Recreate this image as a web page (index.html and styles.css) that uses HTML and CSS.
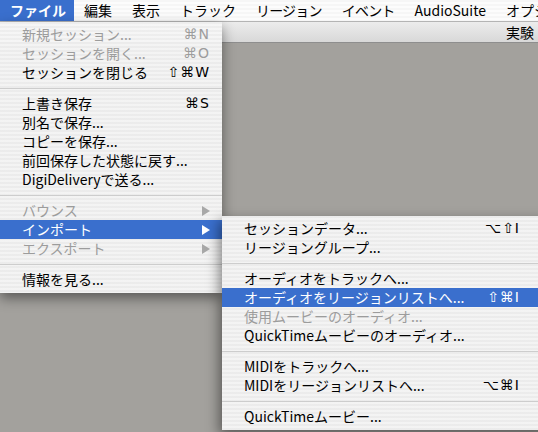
FILE: index.html
```html
<!DOCTYPE html>
<html lang="ja">
<head>
  <meta charset="UTF-8">
  <title>ファイル メニュー</title>
  <link rel="stylesheet" href="styles.css">
</head>
<body>
  <div class="menubar">
    <span class="mb-item active">ファイル</span>
    <span class="mb-item">編集</span>
    <span class="mb-item">表示</span>
    <span class="mb-item">トラック</span>
    <span class="mb-item tight">リージョン</span>
    <span class="mb-item tight">イベント</span>
    <span class="mb-item">AudioSuite</span>
    <span class="mb-item">オプション</span>
  </div>

  <div class="window">
    <div class="titlebar"><span class="title">実験</span></div>
    <div class="content"></div>
  </div>

  <div class="menu file-menu">
    <div class="item disabled"><span>新規セッション...</span><span class="key">⌘N</span></div>
    <div class="item disabled"><span>セッションを開く...</span><span class="key">⌘O</span></div>
    <div class="item"><span>セッションを閉じる</span><span class="key">⇧⌘W</span></div>
    <div class="sep"></div>
    <div class="item"><span>上書き保存</span><span class="key">⌘S</span></div>
    <div class="item"><span>別名で保存...</span></div>
    <div class="item"><span>コピーを保存...</span></div>
    <div class="item"><span>前回保存した状態に戻す...</span></div>
    <div class="item"><span>DigiDeliveryで送る...</span></div>
    <div class="sep"></div>
    <div class="item disabled"><span>バウンス</span><span class="arrow"></span></div>
    <div class="item selected"><span>インポート</span><span class="arrow"></span></div>
    <div class="item disabled"><span>エクスポート</span><span class="arrow"></span></div>
    <div class="sep"></div>
    <div class="item"><span>情報を見る...</span></div>
  </div>

  <div class="menu sub-menu">
    <div class="item"><span>セッションデータ...</span><span class="key">⌥⇧I</span></div>
    <div class="item"><span>リージョングループ...</span></div>
    <div class="sep"></div>
    <div class="item"><span>オーディオをトラックへ...</span></div>
    <div class="item selected"><span>オーディオをリージョンリストへ...</span><span class="key">⇧⌘I</span></div>
    <div class="item disabled"><span>使用ムービーのオーディオ...</span></div>
    <div class="item"><span>QuickTimeムービーのオーディオ...</span></div>
    <div class="sep"></div>
    <div class="item"><span>MIDIをトラックへ...</span></div>
    <div class="item"><span>MIDIをリージョンリストへ...</span><span class="key">⌥⌘I</span></div>
    <div class="sep"></div>
    <div class="item"><span>QuickTimeムービー...</span></div>
  </div>
</body>
</html>
```

FILE: styles.css
```css
* {
  box-sizing: border-box;
}

body {
  margin: 0;
  width: 538px;
  height: 432px;
  overflow: hidden;
  position: relative;
  background: #a3a19d;
  font-family: "Noto Sans CJK JP", "DejaVu Sans", sans-serif;
  font-size: 14px;
  color: #000;
}

.menubar {
  display: flex;
  height: 22px;
  white-space: nowrap;
  background: repeating-linear-gradient(#f6f6f6 0 2px, #fcfcfc 2px 4px);
  border-bottom: 1px solid #b4b4b4;
}

.mb-item {
  padding: 0 10px;
  line-height: 21px;
}

.mb-item.tight {
  letter-spacing: -0.8px;
}

.mb-item.active {
  padding: 0 8px 0 10px;
  background: #3a6fcd;
  color: #fff;
  font-weight: bold;
}

.window {
  width: 1040px;
}

.titlebar {
  height: 21px;
  display: flex;
  justify-content: center;
  background: linear-gradient(#ececec, #d8d8d8);
  border-bottom: 1px solid #8e8e8e;
}

.title {
  line-height: 20px;
  font-size: 14px;
}

.content {
  height: 400px;
  background: #a3a19d;
}

/* menus float over the window */
.menu {
  position: absolute;
  padding: 3px 0 4px;
  background: repeating-linear-gradient(rgba(238, 238, 238, 0.97) 0 2px, rgba(246, 246, 246, 0.97) 2px 4px);
  box-shadow: 0 5px 12px rgba(0, 0, 0, 0.45);
  white-space: nowrap;
}

.file-menu {
  left: 0;
  top: 22px;
  width: 222px;
}

.sub-menu {
  left: 222px;
  top: 216px;
  width: 330px;
  box-shadow: -3px 5px 12px rgba(0, 0, 0, 0.45);
}

.item {
  display: flex;
  justify-content: space-between;
  align-items: center;
  height: 19px;
  line-height: 19px;
  padding: 0 12px 0 22px;
}

.sub-menu .item {
  padding-right: 32px;
}

.item.disabled {
  color: #9c9c9c;
}

.item.selected {
  background: #3a6fcd;
  color: #fff;
}

.key {
  font-family: "DejaVu Sans", sans-serif;
  font-size: 14px;
  letter-spacing: 1px;
}

.sep {
  height: 12px;
  display: flex;
  align-items: center;
}

.sep::before {
  content: '';
  flex: 1;
  border-top: 1px solid #cdcdcd;
}

.arrow {
  width: 0;
  height: 0;
  border-left: 8px solid #a8a8a8;
  border-top: 5px solid transparent;
  border-bottom: 5px solid transparent;
}

.item.selected .arrow {
  border-left-color: #fff;
}
```
